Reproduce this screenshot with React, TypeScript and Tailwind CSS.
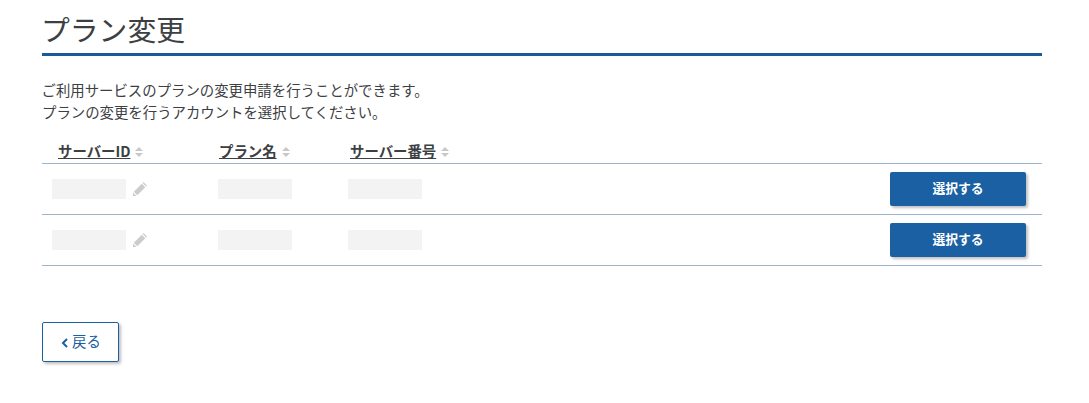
const FONT = "font-['Noto_Sans_CJK_JP','Noto_Sans',sans-serif]";

function SortIcon() {
  return (
    <svg width="8" height="10" viewBox="0 0 8 10" className="ml-[5px] mt-[2px]">
      <path d="M4 0 L8 4 H0 Z M0 6 H8 L4 10 Z" fill="#c8c8c8" />
    </svg>
  );
}

function PencilIcon() {
  return (
    <svg width="14" height="14" viewBox="0 0 14 14" className="ml-[7px]">
      <path d="M0 14 V10.5 L3.5 14 Z M0.8 9.7 L8.8 1.7 L12.3 5.2 L4.3 13.2 Z M9.6 0.9 L10.5 0 L14 3.5 L13.1 4.4 Z" fill="#cccccc" />
    </svg>
  );
}

function Blank() {
  return <div className="w-[74px] h-5 bg-[#f3f3f3]" />;
}

function Row() {
  return (
    <div className="flex items-center h-[51px] border-b border-[#9db4cd]">
      <div className="w-[176px] pl-[10px] flex items-center">
        <Blank />
        <PencilIcon />
      </div>
      <div className="w-[130px]">
        <Blank />
      </div>
      <div className="flex-1">
        <Blank />
      </div>
      <button className="w-[136px] h-[34px] mr-4 pb-[2px] bg-[#1a60a3] rounded-[2px] text-white text-[12.8px] font-bold shadow-[2px_2px_3px_rgba(0,0,0,0.25)]">
        選択する
      </button>
    </div>
  );
}

export default function App() {
  return (
    <div className={`${FONT} w-[1089px] h-[403px] bg-white text-[#3c4043] overflow-hidden`}>
      <div className="w-[1000px] ml-[42px]">
        <h1 className="h-[56px] pt-[6px] -indent-[1px] text-[28.8px] leading-[45px] border-b-[3px] border-[#1a5a96]">プラン変更</h1>
        <p className="mt-[23px] -indent-[0.5px] text-[14.4px] leading-[22px]">
          ご利用サービスのプランの変更申請を行うことができます。
          <br />
          プランの変更を行うアカウントを選択してください。
        </p>
        <div className="mt-[17px] flex items-center h-[24px] pb-[2px] border-b border-[#9db4cd] text-[14.4px] font-bold">
          <div className="w-[177px] pl-4 flex items-center">
            <span className="underline">サーバーID</span>
            <SortIcon />
          </div>
          <div className="w-[131px] flex items-center">
            <span className="underline">プラン名</span>
            <SortIcon />
          </div>
          <div className="flex items-center">
            <span className="underline">サーバー番号</span>
            <SortIcon />
          </div>
        </div>
        <Row />
        <Row />
        <button className="mt-[56px] pb-[2px] pl-[1px] flex items-center justify-center w-[77px] h-10 bg-white border border-[#1a60a3] rounded-[2px] text-[#1a60a3] text-[14.4px] shadow-[2px_2px_3px_rgba(0,0,0,0.25)]">
          <svg width="8" height="10" viewBox="0 0 8 10" className="mr-[3px] mt-[4px]">
            <path d="M6 1 L2 5 L6 9" fill="none" stroke="#1a60a3" strokeWidth="2" />
          </svg>
          戻る
        </button>
      </div>
    </div>
  );
}
